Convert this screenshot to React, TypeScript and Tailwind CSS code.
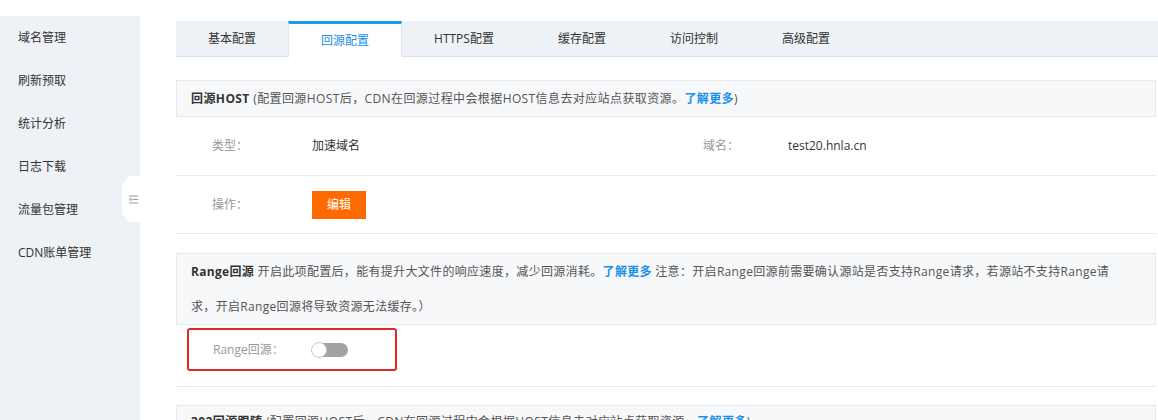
import React from "react";

const menu = ["域名管理", "刷新预取", "统计分析", "日志下载", "流量包管理", "CDN账单管理"];
const tabs = ["基本配置", "回源配置", "HTTPS配置", "缓存配置", "访问控制", "高级配置"];

function Link({ children }: { children: React.ReactNode }) {
  return <span className="font-bold text-[#1a90e8]">{children}</span>;
}

export default function App() {
  return (
    <div
      className="w-[1158px] h-[420px] overflow-hidden bg-white text-[12px] text-[#333] flex"
      style={{ fontFamily: '"Open Sans", "Noto Sans CJK SC", sans-serif' }}
    >
      {/* sidebar */}
      <div className="relative w-[140px] mt-[16px] bg-[#eef1f5] shrink-0">
        {menu.map((m) => (
          <div key={m} className="h-[43px] flex items-center pl-[18px] text-[#333]">
            {m}
          </div>
        ))}
        <div className="absolute left-[122px] top-[160px] w-[18px] h-[46px] bg-white flex items-center justify-center [clip-path:polygon(40%_0,100%_0,100%_100%,40%_100%,0_82%,0_18%)]">
          <svg width="9" height="9" viewBox="0 0 9 9" className="ml-[4px]">
            <path d="M0 1h9M3.5 4.5h5.5M0 8h9" stroke="#999" strokeWidth="1" />
            <path d="M0 4.5L2.5 2.8v3.4z" fill="#999" />
          </svg>
        </div>
      </div>

      {/* main */}
      <div className="flex-1 pl-[36px] pt-[21px]">
        <div className="flex h-[36px] bg-[#eef1f5] border-b border-[#dde1e6]">
          {tabs.map((t, i) =>
            i === 1 ? (
              <div
                key={t}
                className="px-[32px] flex items-center bg-white border-t-[3px] border-[#1a9cf0] border-x border-x-[#e2e5ea] -mb-px text-[#1a90e8]"
              >
                {t}
              </div>
            ) : (
              <div key={t} className="px-[32px] flex items-center text-[#333]">
                {t}
              </div>
            )
          )}
        </div>

        <div className="w-[980px] mt-[23px]">
          {/* 回源HOST */}
          <div className="h-[37px] flex items-center px-[14px] bg-[#f7f8fa] border border-[#e7e9ec] whitespace-nowrap tracking-[0.4px]">
            <span className="font-bold text-[#333]">回源HOST</span>
            <span className="text-[#555]">&nbsp;(配置回源HOST后，CDN在回源过程中会根据HOST信息去对应站点获取资源。</span>
            <Link>了解更多</Link>
            <span className="text-[#555]">)</span>
          </div>
          <div className="h-[59px] flex items-center pl-[36px] border-b border-[#ebebeb]">
            <span className="w-[100px] text-[#999]">类型：</span>
            <span className="w-[391px]">加速域名</span>
            <span className="w-[85px] text-[#999]">域名：</span>
            <span>test20.hnla.cn</span>
          </div>
          <div className="h-[58px] flex items-center pl-[36px] border-b border-[#ebebeb]">
            <span className="w-[100px] text-[#999]">操作：</span>
            <button className="w-[54px] h-[28px] bg-[#ff6a00] text-white">编辑</button>
          </div>

          {/* Range回源 */}
          <div className="mt-[19px] px-[14px] bg-[#f7f8fa] border border-[#e7e9ec] leading-[35px] whitespace-nowrap text-[#555] tracking-[0.32px]">
            <div>
              <span className="font-bold text-[#333]">Range回源</span>
              &nbsp;开启此项配置后，能有提升大文件的响应速度，减少回源消耗。
              <Link>了解更多</Link>
              &nbsp;注意：开启Range回源前需要确认源站是否支持Range请求，若源站不支持Range请
            </div>
            <div>求，开启Range回源将导致资源无法缓存。）</div>
          </div>
          <div className="h-[62px] pt-[3px] pl-[11px] border-b border-[#ebebeb]">
            <div className="w-[210px] h-[43px] border-2 border-[#e3262a] rounded-[3px] flex items-center pl-[24px]">
              <span className="w-[99px] text-[#999]">Range回源：</span>
              <span className="relative w-[36px] h-[14px] rounded-full bg-[#a3a3a3]">
                <span className="absolute -left-px -top-[1px] w-[16px] h-[16px] rounded-full bg-white border border-[#c8c8c8]" />
              </span>
            </div>
          </div>

          {/* 302回源跟随 */}
          <div className="mt-[18px] h-[37px] px-[14px] pt-[7px] bg-[#f7f8fa] border border-[#e7e9ec] whitespace-nowrap tracking-[0.4px]">
            <span className="font-bold text-[#333]">302回源跟随</span>
            <span className="text-[#555]">&nbsp;(配置回源HOST后，CDN在回源过程中会根据HOST信息去对应站点获取资源。</span>
            <Link>了解更多</Link>
            <span className="text-[#555]">)</span>
          </div>
        </div>
      </div>
    </div>
  );
}
